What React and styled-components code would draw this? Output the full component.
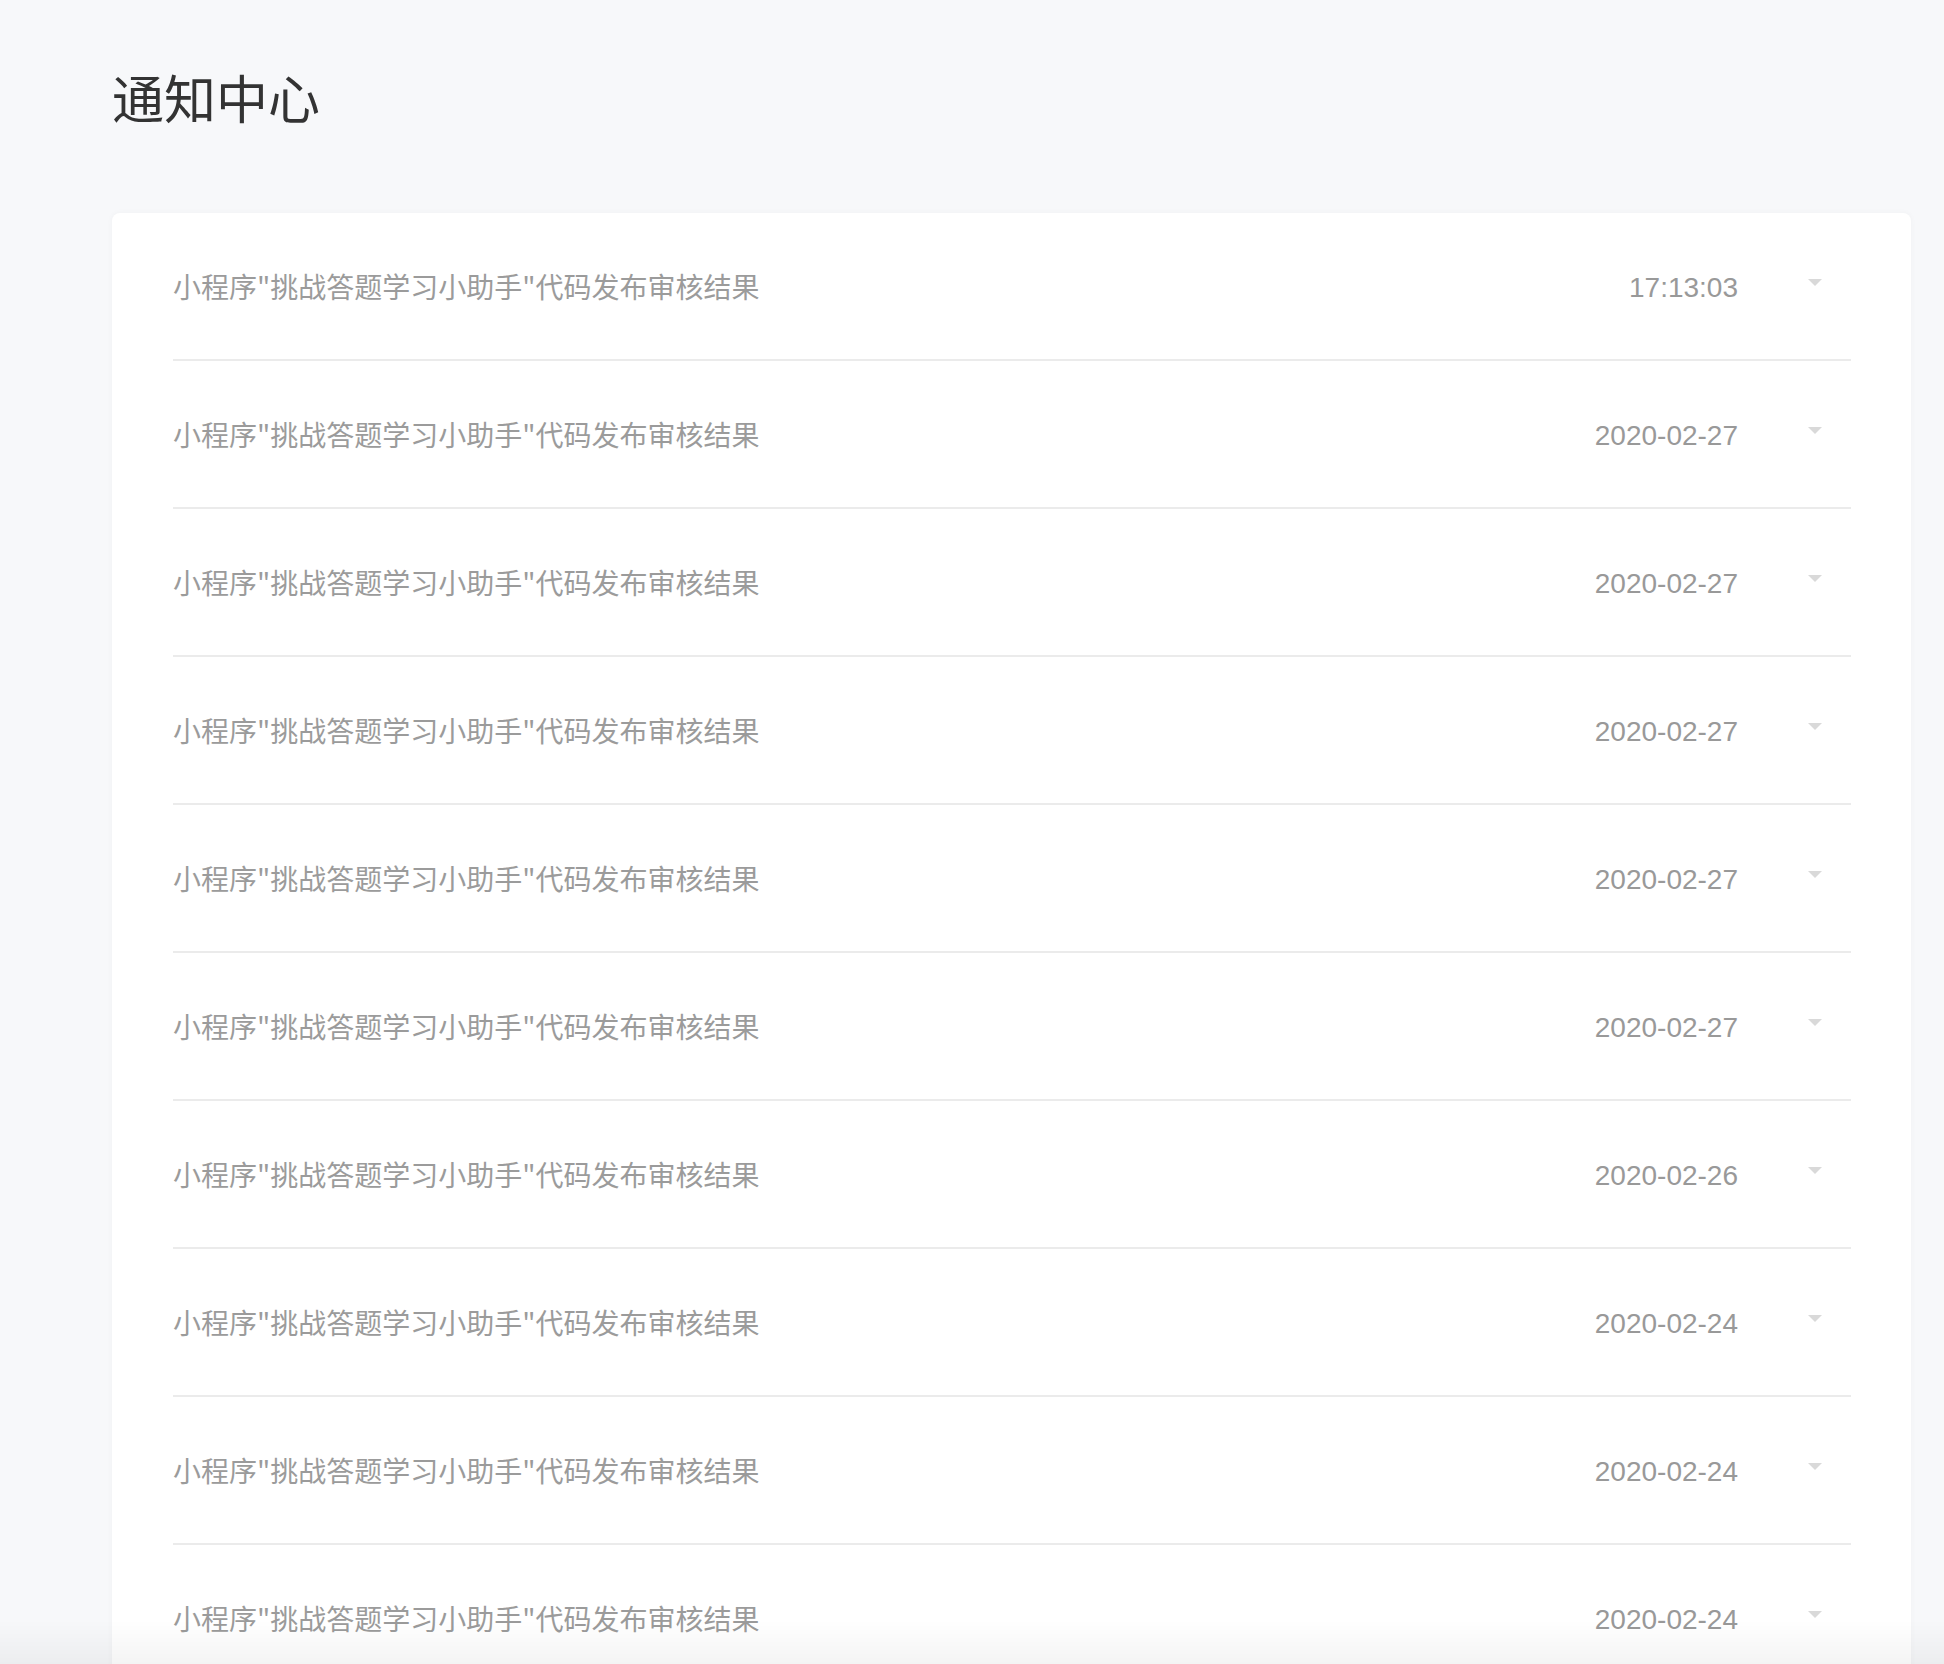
import React from 'react';
import styled, { createGlobalStyle } from 'styled-components';

const GlobalStyle = createGlobalStyle`
    html, body {
        margin: 0;
        padding: 0;
        background: #f7f8fa;
    }
    * {
        box-sizing: border-box;
    }
`

const StylePage = styled.main`
    padding: 66px 33px 0 112px;
    font-family: "Noto Sans CJK SC", "Noto Sans", sans-serif;
`

const StyledTitulo = styled.h1`
    margin: 0 0 85px 0;
    font-size: 52px;
    line-height: 62px;
    font-weight: 400;
    color: #333333;
`

const StyleCard = styled.section`
    background: #ffffff;
    border-radius: 8px;
    box-shadow: 0 0 6px rgba(0, 0, 0, 0.035);
    padding: 0 60px 0 61px;
`

const StyleFila = styled.div`
    display: flex;
    align-items: center;
    height: 148px;
    border-bottom: 2px solid #ebebeb;
`

const StyledAsunto = styled.span`
    flex: 1;
    font-size: 28px;
    color: #9b9b9b;
    white-space: nowrap;
`

const StyledFecha = styled.span`
    padding-top: 4px;
    font-family: "Liberation Sans", Arial, sans-serif;
    font-size: 28px;
    color: #999999;
`

const StyledFlecha = styled.span`
    width: 0;
    height: 0;
    margin: 0 29px 8px 70px;
    border-left: 7px solid transparent;
    border-right: 7px solid transparent;
    border-top: 7px solid #d9d9d9;
`

const StyleSombra = styled.div`
    position: fixed;
    left: 0;
    right: 0;
    bottom: 0;
    height: 44px;
    pointer-events: none;
    background: linear-gradient(to bottom, rgba(0, 0, 0, 0), rgba(0, 0, 0, 0.045));
`

const avisos = [
    '17:13:03',
    '2020-02-27',
    '2020-02-27',
    '2020-02-27',
    '2020-02-27',
    '2020-02-27',
    '2020-02-26',
    '2020-02-24',
    '2020-02-24',
    '2020-02-24',
]

const App = () => {
    return (
        <>
            <GlobalStyle />
            <StylePage>
                <StyledTitulo>通知中心</StyledTitulo>
                <StyleCard>
                    {avisos.map((fecha, i) => (
                        <StyleFila key={i}>
                            <StyledAsunto>小程序"挑战答题学习小助手"代码发布审核结果</StyledAsunto>
                            <StyledFecha>{fecha}</StyledFecha>
                            <StyledFlecha />
                        </StyleFila>
                    ))}
                </StyleCard>
            </StylePage>
            <StyleSombra />
        </>
    )
}

export default App
